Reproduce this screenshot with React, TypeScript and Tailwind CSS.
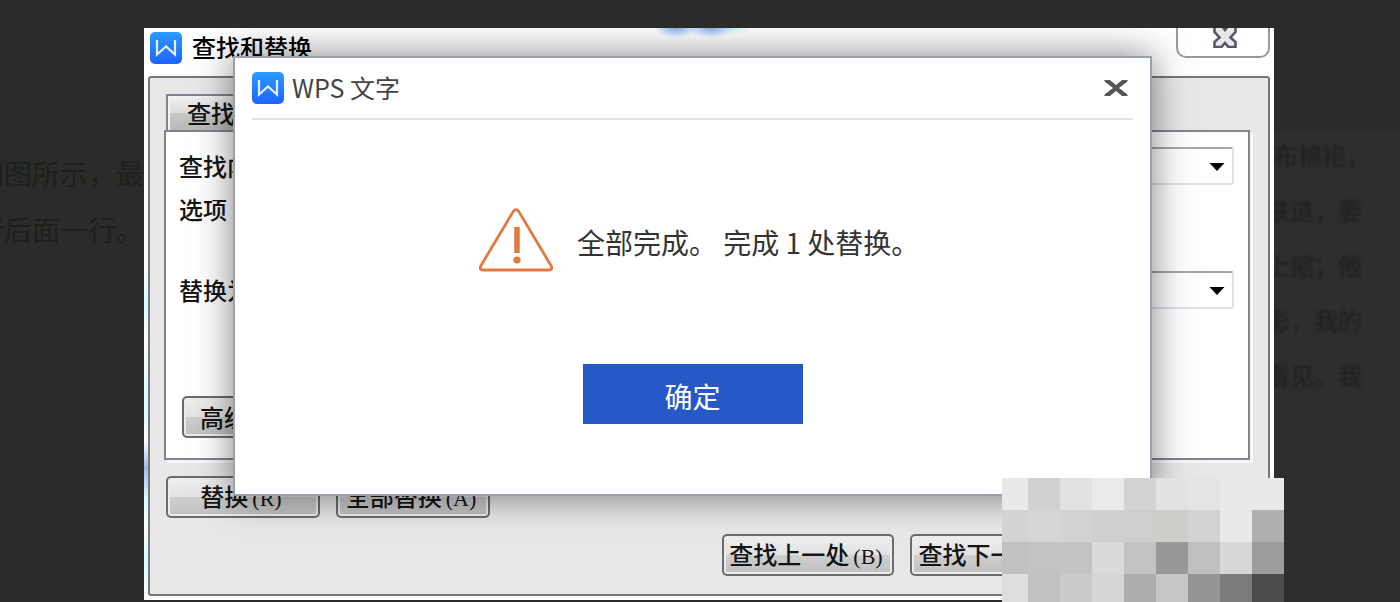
import type { ReactNode } from "react";

function WpsLogo() {
  return (
    <svg className="size-8 shrink-0" viewBox="0 0 32 32" aria-hidden="true">
      <defs>
        <linearGradient id="wps" x1="0" y1="0" x2="0" y2="1">
          <stop offset="0" stopColor="#2b9bff" />
          <stop offset="1" stopColor="#1f63ff" />
        </linearGradient>
      </defs>
      <rect width="32" height="32" rx="5" fill="url(#wps)" />
      <path d="M7 8V22.5L16 14.5L25 22.5V8" fill="none" stroke="#e4f1ff" strokeWidth="2.2" />
    </svg>
  );
}

function WarningIcon() {
  return (
    <svg className="h-16 w-[74px] shrink-0" viewBox="0 0 74 64" aria-hidden="true">
      <path
        d="M34.3 3.4Q37 -0.2 39.7 3.4L72 57.5Q74 62 70 62H4Q0 62 2 57.5Z"
        fill="none"
        stroke="#e2793f"
        strokeWidth="2.8"
        strokeLinejoin="round"
      />
      <path d="M38 19V45" stroke="#e2793f" strokeWidth="5.5" />
      <circle cx="38" cy="52" r="3.6" fill="#e2793f" />
    </svg>
  );
}

function ClassicButton({ children, className = "" }: { children: ReactNode; className?: string }) {
  return (
    <button
      type="button"
      className={`h-[42px] shrink-0 whitespace-nowrap rounded-[5px] border-2 border-[#6c6c6c] bg-[linear-gradient(#f0f0f0,#e2e2e2_50%,#cfcfcf_50%,#c0c0c0)] text-2xl font-medium leading-9 text-[#151515] shadow-[inset_0_0_0_2px_#ececec] ${className}`}
    >
      {children}
    </button>
  );
}

function Key({ children }: { children: string }) {
  return <span className="ml-1 mr-1 font-['Liberation_Serif',serif] text-[22px]">({children})</span>;
}

function ComboBox({ id, label }: { id: string; label: string }) {
  return (
    <div className="flex h-[38px] items-center gap-6">
      <label htmlFor={id} className="shrink-0">
        {label}
      </label>
      <div className="relative flex-1">
        <select
          id={id}
          className="block h-[38px] w-full appearance-none rounded-[3px] border-2 border-[#dbe2eb] border-t-[#a5a5aa] bg-white"
        />
        <svg className="pointer-events-none absolute right-[9px] top-4 h-2 w-4" viewBox="0 0 16 8" aria-hidden="true">
          <path d="M0.5 0H15.5L8 8Z" fill="#000" />
        </svg>
      </div>
    </div>
  );
}

const mosaic: string[][] = [
  ["#e8e9eb", "#cfd1d3", "#e2e2e2", "#e8ebea", "#d3d3d3", "#e2e2e2", "#e4e4e4", "#e9e9e9", "#e9e9e9"],
  ["#d3d3d3", "#d5d5d5", "#d3d3d3", "#cfcfcf", "#cecece", "#cdcdca", "#d3d3d3", "#e9e9e9", "#afafaf"],
  ["#c1c1c1", "#c3c3c3", "#c4c4c4", "#dadada", "#c3c3c3", "#989898", "#bfbfbf", "#d8d8d8", "#9c9c9c"],
  ["#dedede", "#c1c1c1", "#cacaca", "#d6d6d6", "#adadad", "#c7c7c7", "#949494", "#7b7b7b", "#4b4b4b"],
];

function Mosaic() {
  return (
    <div className="absolute -right-[10px] top-[450px] grid w-[282px] grid-cols-[26px_repeat(8,32px)] grid-rows-[32px_32px_32px_28px]">
      {mosaic.flat().map((color, i) => (
        <span key={i} style={{ backgroundColor: color }} />
      ))}
    </div>
  );
}

function MessageDialog() {
  return (
    <section
      role="dialog"
      aria-labelledby="message-title"
      className="absolute left-[89px] right-[122px] top-7 flex h-[440px] flex-col border-2 border-[#9a9fac] bg-white px-[17px] shadow-[0_0_35px_rgba(0,0,0,0.5)]"
    >
      <header className="flex h-[62px] items-center gap-2 border-b-2 border-[#e3e3e3]">
        <WpsLogo />
        <h2 id="message-title" className="flex-1 text-[25px] text-[#444]">
          WPS 文字
        </h2>
        <button type="button" aria-label="关闭" className="mr-[5px]">
          <svg className="h-[18px] w-6" viewBox="0 0 24 18" aria-hidden="true">
            <path d="M0.5 1H6L12 6L18 1H23.5V2.5L15 9L23.5 15.5V17H18L12 12L6 17H0.5V15.5L9 9L0.5 2.5Z" fill="#555" />
          </svg>
        </button>
      </header>
      <div className="mt-[88px] flex items-center gap-6 pl-[227px]">
        <WarningIcon />
        <p className="whitespace-pre pt-1 text-[28px] leading-10 text-[#333]">全部完成。 完成 1 处替换。</p>
      </div>
      <button type="button" className="mx-auto mt-[92px] h-[60px] w-[220px] bg-[#2658c7] pt-1 text-[28px] text-white">
        确定
      </button>
    </section>
  );
}

export default function App() {
  return (
    <div className="flex min-h-screen w-full overflow-hidden bg-[#2a2c29] font-['Noto_Sans_CJK_SC',sans-serif]">
      <aside className="flex w-36 shrink-0 flex-col items-end overflow-hidden pt-[145px] text-[28px] leading-[56px] text-[#1e201e]">
        <p className="whitespace-nowrap">如图所示，最</p>
        <p className="whitespace-nowrap">行后面一行。</p>
      </aside>

      <main className="relative mt-7 h-[572px] min-w-0 flex-1 bg-white">
        <div className="absolute inset-y-0 left-0 w-1 bg-[linear-gradient(#fff_42%,#d5fbff_48%,#fff_54%,#d5fbff_66%,#fff_72%,#9fb8ee_77%,#d5fbff_82%,#fff_87%,#d5fbff_93%,#fff)]" />
        <div className="flex h-full flex-col overflow-hidden px-1 pb-1">
          <header className="flex h-12 shrink-0 items-start">
            <div className="flex flex-1 items-center gap-[10px] pl-[2px] pt-1">
              <WpsLogo />
              <h1 className="-mt-[2px] text-2xl font-medium leading-8 text-black">查找和替换</h1>
            </div>
            <button
              type="button"
              aria-label="关闭窗口"
              className="flex h-[30px] w-[94px] justify-center rounded-b-[10px] border-2 border-t-0 border-[#999] bg-white pl-1"
            >
              <svg className="h-5 w-6" viewBox="0 0 24 20" aria-hidden="true">
                <path
                  d="M1.5 1V-2H9L12 2L15 -2H22.5V4L17.5 9.5L22.5 14V19H15.5L12 15L8.5 19H1.5V14L6.5 9.5L1.5 4Z"
                  fill="#e8e8e8"
                  stroke="#565669"
                  strokeWidth="2.6"
                />
              </svg>
            </button>
          </header>

          <div className="flex flex-1 flex-col rounded-[3px] border-2 border-[#777] bg-[#e8e8e8] pl-[14px] pr-[18px] pt-4 text-2xl font-medium text-[#151515]">
            <div className="flex pl-[2px]">
              <button
                type="button"
                className="h-9 w-32 border-2 border-b-0 border-[#83838f] bg-[linear-gradient(#f0f0f0,#dcdcdc_50%,#cacaca_50%,#b8b8b8)] pl-[19px] text-left leading-[34px] shadow-[inset_2px_2px_0_#f3f3f3]"
              >
                查找
              </button>
            </div>
            <div className="flex h-[330px] flex-col border-2 border-[#83838f] bg-white pl-[13px] pr-[14px] pt-[15px] shadow-[3px_3px_0_#f8f8f8]">
              <ComboBox id="find" label="查找内容" />
              <div className="mt-2 leading-8">选项</div>
              <div className="mt-[46px]">
                <ComboBox id="replace" label="替换为" />
              </div>
              <div className="mt-[87px] flex pl-[3px]">
                <ClassicButton className="w-[150px] pl-4 text-left">高级</ClassicButton>
              </div>
            </div>
            <div className="mt-4 flex gap-4 pl-[2px]">
              <ClassicButton className="w-[154px]">
                替换<Key>R</Key>
              </ClassicButton>
              <ClassicButton className="w-[154px]">
                全部替换<Key>A</Key>
              </ClassicButton>
            </div>
            <div className="mt-4 flex justify-end gap-4">
              <ClassicButton className="w-[172px]">
                查找上一处<Key>B</Key>
              </ClassicButton>
              <ClassicButton className="w-[172px]">
                查找下一处<Key>F</Key>
              </ClassicButton>
              <ClassicButton className="w-[152px]">关闭</ClassicButton>
            </div>
          </div>
        </div>

        <div className="pointer-events-none absolute inset-0 overflow-hidden">
          <MessageDialog />
          <div className="absolute left-[512px] top-0 h-3 w-24 bg-[radial-gradient(ellipse_22px_10px_at_20px_0,#8fa6d8,#b4cdef_50%,transparent),radial-gradient(ellipse_24px_10px_at_55px_0,#8fa6d8,#b4cdef_50%,transparent),radial-gradient(ellipse_22px_7px_at_76px_0,#c0efef,transparent)]" />
        </div>
        <Mosaic />
      </main>

      <aside className="mt-[132px] flex w-[126px] shrink-0 flex-col items-end overflow-hidden bg-[#2e2e2e] pr-[38px] text-2xl font-medium leading-[55px] text-[#212123]">
        <div className="-mt-[5px] flex flex-col items-end blur-[1px]">
          <p className="-mr-2 whitespace-nowrap">布棉袍，</p>
          <p className="whitespace-nowrap">铁道，要</p>
          <p className="whitespace-nowrap">上缩；他</p>
          <p className="whitespace-nowrap">影，我的</p>
          <p className="whitespace-nowrap">看见。我</p>
        </div>
      </aside>
    </div>
  );
}
